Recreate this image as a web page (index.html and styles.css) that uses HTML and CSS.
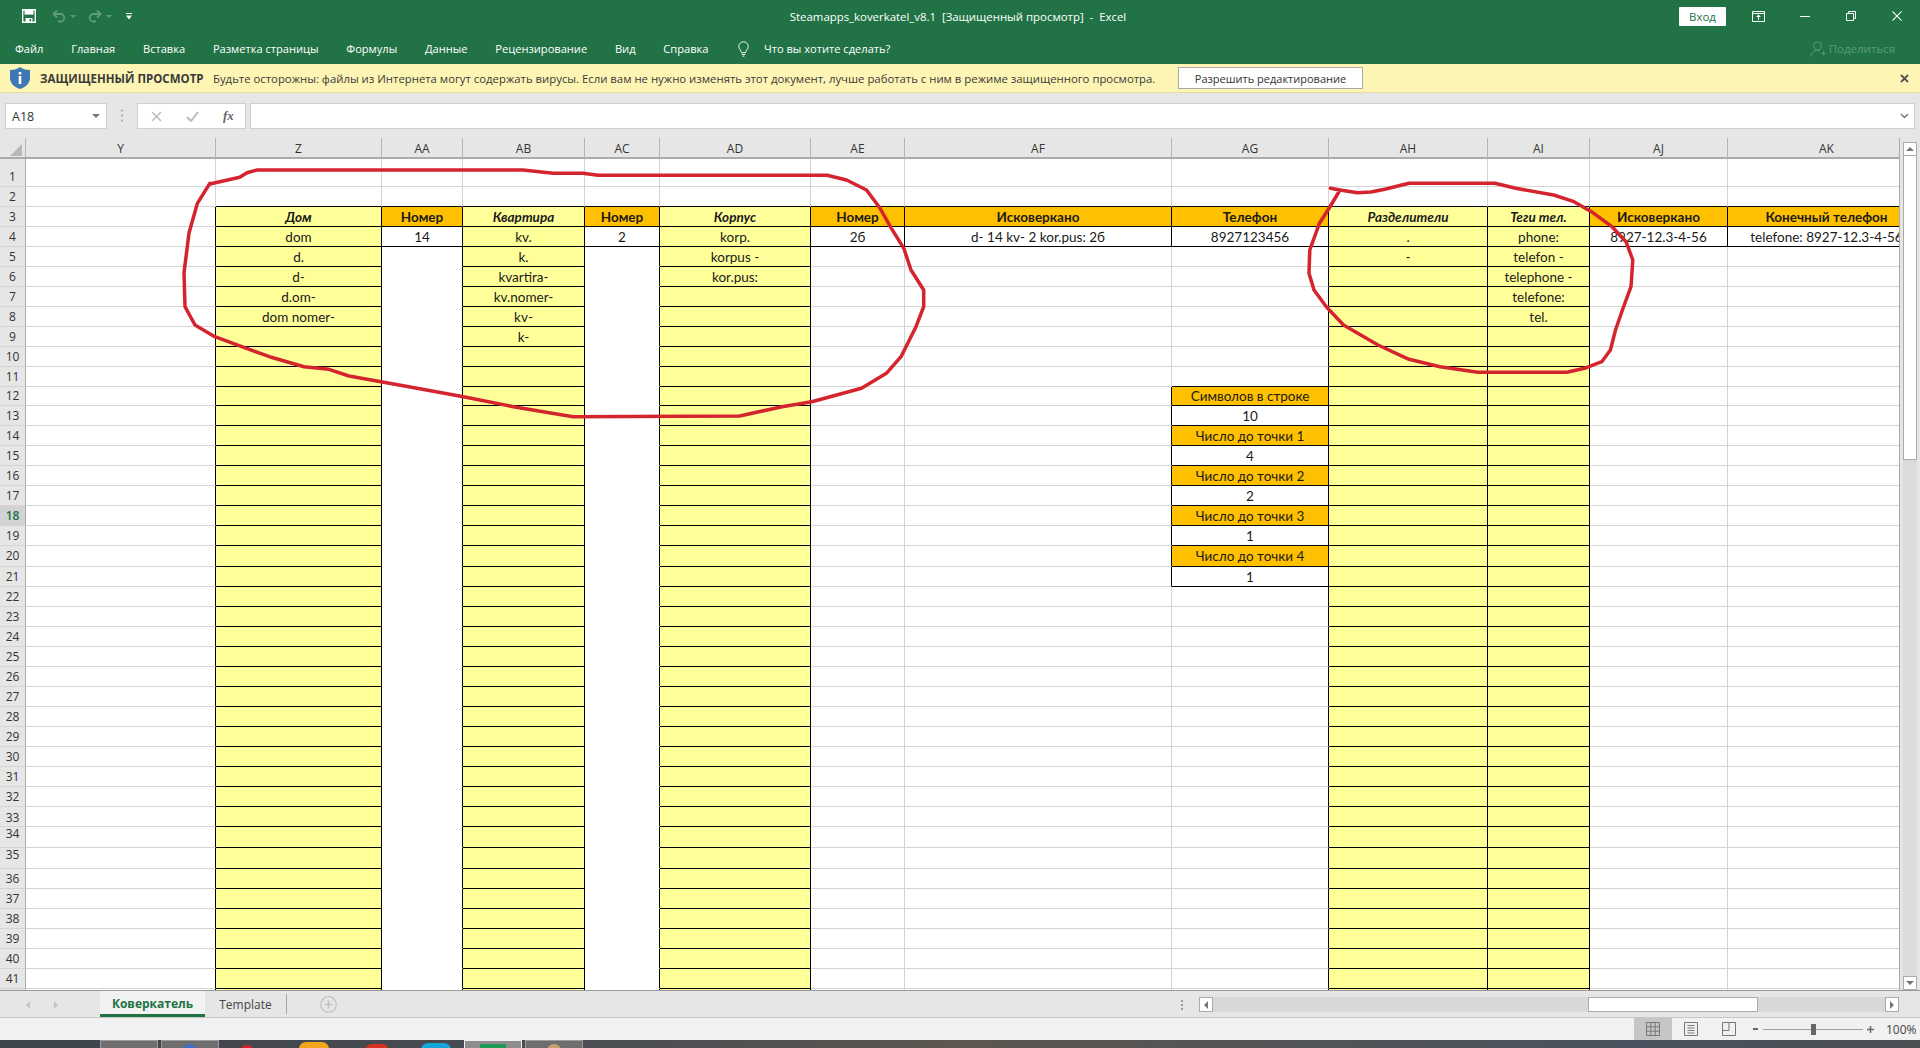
FILE: index.html
```html
<!DOCTYPE html>
<html lang="ru">
<head>
<meta charset="utf-8">
<title>Steamapps_koverkatel_v8.1</title>
<link rel="stylesheet" href="styles.css">
</head>
<body>
<header class="titlebar">
  <div class="qat">
    <svg class="ic-save" viewBox="0 0 14 14"><path d="M.7.7h12.6v12.6H.7z" fill="none" stroke="#fff" stroke-width="1.4"/><path d="M2.5 1h9v4.6h-9z" fill="#fff"/><path d="M3.5 9h7v4h-7z" fill="#fff"/><path d="M7.5 10h1.6v2.4H7.5z" fill="#217346"/></svg>
    <svg class="ic-undo" viewBox="0 0 14 14"><path d="M5 1.5 1.5 5 5 8.500M2 5h6.500a3.700 3.700 0 0 1 0 7.500H6" fill="none" stroke="#5f9c7c" stroke-width="1.800"/></svg>
    <span class="caret-dim"></span>
    <svg class="ic-redo" viewBox="0 0 14 14"><path d="M9 1.500 12.500 5 9 8.500M12 5H5.500a3.700 3.700 0 0 0 0 7.500H8" fill="none" stroke="#5f9c7c" stroke-width="1.800"/></svg>
    <span class="caret-dim"></span>
    <svg class="ic-custom" viewBox="0 0 6 7"><path d="M0 0h6v1H0zM0 2.500h6L3 6.500z" fill="#fff"/></svg>
  </div>
  <div class="doc-title">Steamapps_koverkatel_v8.1&nbsp; [Защищенный просмотр] &nbsp;-&nbsp; Excel</div>
  <div class="win">
    <button class="signin">Вход</button>
    <svg class="ic-display" viewBox="0 0 13 11"><path d="M.5.500h12v10H.5zM.5 2.500h12" fill="none" stroke="#fff"/><path d="M6.500 3.500 4 6h2v3h1V6h2z" fill="#fff"/></svg>
    <svg class="ic-min" viewBox="0 0 10 1"><path d="M0 0h10v1H0z" fill="#fff"/></svg>
    <svg class="ic-restore" viewBox="0 0 10 10"><path d="M.5 2.500h7v7h-7zM2.500 2.500v-2h7v7h-2" fill="none" stroke="#fff"/></svg>
    <svg class="ic-close" viewBox="0 0 10 10"><path d="m.4.400 9.200 9.200M9.600.400.4 9.600" fill="none" stroke="#fff" stroke-width="1.100"/></svg>
  </div>
</header>
<nav class="menu">
  <span>Файл</span><span>Главная</span><span>Вставка</span><span>Разметка страницы</span><span>Формулы</span><span>Данные</span><span>Рецензирование</span><span>Вид</span><span>Справка</span>
  <svg class="ic-bulb" viewBox="0 0 12 17"><path d="M3.800 12.500C3.500 10 1 8.800.8 5.800a5.200 5.200 0 0 1 10.400 0C11 8.800 8.500 10 8.200 12.500zM4 14.500h4M5 16.300h2" fill="none" stroke="#fff"/></svg>
  <span class="tell">Что вы хотите сделать?</span>
  <span class="share"><svg class="ic-share" viewBox="0 0 17 17"><path d="M8 9.500A4.200 4.200 0 1 0 8 1a4.200 4.200 0 0 0 0 8.500zM1 16.500c.3-4 3-6.500 7-6.500 1 0 1.800.1 2.500.4M12 13h5M14.500 10.500v5" fill="none" stroke="#5b9a79"/></svg>Поделиться</span>
</nav>
<section class="protected">
  <svg class="ic-shield" viewBox="0 0 20 22"><path d="M10 0c2.500 2 5.500 2.800 10 3v8c0 5-4 9-10 11C4 20 0 16 0 11V3c4.500-.2 7.500-1 10-3z" fill="#3f79b5"/><path d="M8.700 5h2.600v2.500H8.700zM8.700 9h2.600v8H8.700z" fill="#fff"/></svg>
  <strong>ЗАЩИЩЕННЫЙ ПРОСМОТР</strong>
  <span class="warn">Будьте осторожны: файлы из Интернета могут содержать вирусы. Если вам не нужно изменять этот документ, лучше работать с ним в режиме защищенного просмотра.</span>
  <button class="allow">Разрешить редактирование</button>
  <svg class="ic-x" viewBox="0 0 9 9"><path d="m1 1 7 7M8 1 1 8" fill="none" stroke="#555" stroke-width="1.800"/></svg>
</section>
<section class="formula">
  <div class="namebox">A18<span class="caret"></span></div>
  <div class="dots"></div>
  <div class="fxbox">
    <svg class="ic-cancel" viewBox="0 0 11 11"><path d="m1 1 9 9M10 1l-9 9" fill="none" stroke="#bdbdbd" stroke-width="1.500"/></svg>
    <svg class="ic-ok" viewBox="0 0 13 11"><path d="m1 6 4 4 7-9" fill="none" stroke="#bdbdbd" stroke-width="2"/></svg>
    <i class="fx">fx</i>
  </div>
  <div class="input"><svg class="ic-chev" viewBox="0 0 9 6"><path d="m1 1 3.500 3.500L8 1" fill="none" stroke="#777" stroke-width="1.500"/></svg></div>
</section>
<main class="sheet">
  <div class="wrap">
    <table class="grid">
      <colgroup><col class="c0"><col class="cy"><col class="cz"><col class="caa"><col class="cab"><col class="cac"><col class="cad"><col class="cae"><col class="caf"><col class="cag"><col class="cah"><col class="cai"><col class="caj"><col class="cak"></colgroup>
      <thead><tr><th><span class="tri"></span></th><th>Y</th><th>Z</th><th>AA</th><th>AB</th><th>AC</th><th>AD</th><th>AE</th><th>AF</th><th>AG</th><th>AH</th><th>AI</th><th>AJ</th><th>AK</th></tr></thead>
      <tbody>
        <tr class="r1"><th class="dn8">1</th><td></td><td></td><td></td><td></td><td></td><td></td><td></td><td></td><td></td><td></td><td></td><td></td><td></td></tr>
        <tr class="top"><th>2</th><td></td><td></td><td></td><td></td><td></td><td></td><td></td><td></td><td></td><td></td><td></td><td></td><td></td></tr>
        <tr class="hd"><th>3</th><td></td><td class="hy">Дом</td><td class="ho">Номер</td><td class="hy">Квартира</td><td class="ho">Номер</td><td class="hy">Корпус</td><td class="ho">Номер</td><td class="ho">Исковеркано</td><td class="ho">Телефон</td><td class="hy">Разделители</td><td class="hy">Теги тел.</td><td class="ho">Исковеркано</td><td class="ho">Конечный телефон</td></tr>
        <tr class="hd v"><th>4</th><td></td><td>dom</td><td>14</td><td>kv.</td><td>2</td><td>korp.</td><td>2б</td><td>d- 14 kv- 2 kor.pus: 2б</td><td>8927123456</td><td>.</td><td>phone:</td><td>8927-12.3-4-56</td><td>telefone: 8927-12.3-4-56</td></tr>
        <tr class="b"><th>5</th><td></td><td>d.</td><td></td><td>k.</td><td></td><td>korpus -</td><td></td><td></td><td></td><td>-</td><td>telefon -</td><td></td><td></td></tr>
        <tr class="b"><th>6</th><td></td><td>d-</td><td></td><td>kvartira-</td><td></td><td>kor.pus:</td><td></td><td></td><td></td><td></td><td>telephone -</td><td></td><td></td></tr>
        <tr class="b"><th>7</th><td></td><td>d.om-</td><td></td><td>kv.nomer-</td><td></td><td></td><td></td><td></td><td></td><td></td><td>telefone:</td><td></td><td></td></tr>
        <tr class="b"><th>8</th><td></td><td>dom nomer-</td><td></td><td>kv-</td><td></td><td></td><td></td><td></td><td></td><td></td><td>tel.</td><td></td><td></td></tr>
        <tr class="b"><th>9</th><td></td><td></td><td></td><td>k-</td><td></td><td></td><td></td><td></td><td></td><td></td><td></td><td></td><td></td></tr>
        <tr class="b"><th>10</th><td></td><td></td><td></td><td></td><td></td><td></td><td></td><td></td><td></td><td></td><td></td><td></td><td></td></tr>
        <tr class="b g0"><th>11</th><td></td><td></td><td></td><td></td><td></td><td></td><td></td><td></td><td></td><td></td><td></td><td></td><td></td></tr>
        <tr class="b g r12"><th>12</th><td></td><td></td><td></td><td></td><td></td><td></td><td></td><td></td><td class="ho">Символов в строке</td><td></td><td></td><td></td><td></td></tr>
        <tr class="b g"><th>13</th><td></td><td></td><td></td><td></td><td></td><td></td><td></td><td></td><td>10</td><td></td><td></td><td></td><td></td></tr>
        <tr class="b g"><th>14</th><td></td><td></td><td></td><td></td><td></td><td></td><td></td><td></td><td class="ho">Число до точки 1</td><td></td><td></td><td></td><td></td></tr>
        <tr class="b g"><th>15</th><td></td><td></td><td></td><td></td><td></td><td></td><td></td><td></td><td>4</td><td></td><td></td><td></td><td></td></tr>
        <tr class="b g"><th>16</th><td></td><td></td><td></td><td></td><td></td><td></td><td></td><td></td><td class="ho">Число до точки 2</td><td></td><td></td><td></td><td></td></tr>
        <tr class="b g"><th>17</th><td></td><td></td><td></td><td></td><td></td><td></td><td></td><td></td><td>2</td><td></td><td></td><td></td><td></td></tr>
        <tr class="b g"><th class="sel">18</th><td></td><td></td><td></td><td></td><td></td><td></td><td></td><td></td><td class="ho">Число до точки 3</td><td></td><td></td><td></td><td></td></tr>
        <tr class="b g"><th>19</th><td></td><td></td><td></td><td></td><td></td><td></td><td></td><td></td><td>1</td><td></td><td></td><td></td><td></td></tr>
        <tr class="b g r20"><th>20</th><td></td><td></td><td></td><td></td><td></td><td></td><td></td><td></td><td class="ho">Число до точки 4</td><td></td><td></td><td></td><td></td></tr>
        <tr class="b g"><th>21</th><td></td><td></td><td></td><td></td><td></td><td></td><td></td><td></td><td>1</td><td></td><td></td><td></td><td></td></tr>
        <tr class="b"><th>22</th><td></td><td></td><td></td><td></td><td></td><td></td><td></td><td></td><td></td><td></td><td></td><td></td><td></td></tr>
        <tr class="b"><th>23</th><td></td><td></td><td></td><td></td><td></td><td></td><td></td><td></td><td></td><td></td><td></td><td></td><td></td></tr>
        <tr class="b"><th>24</th><td></td><td></td><td></td><td></td><td></td><td></td><td></td><td></td><td></td><td></td><td></td><td></td><td></td></tr>
        <tr class="b"><th>25</th><td></td><td></td><td></td><td></td><td></td><td></td><td></td><td></td><td></td><td></td><td></td><td></td><td></td></tr>
        <tr class="b"><th>26</th><td></td><td></td><td></td><td></td><td></td><td></td><td></td><td></td><td></td><td></td><td></td><td></td><td></td></tr>
        <tr class="b"><th>27</th><td></td><td></td><td></td><td></td><td></td><td></td><td></td><td></td><td></td><td></td><td></td><td></td><td></td></tr>
        <tr class="b"><th>28</th><td></td><td></td><td></td><td></td><td></td><td></td><td></td><td></td><td></td><td></td><td></td><td></td><td></td></tr>
        <tr class="b"><th>29</th><td></td><td></td><td></td><td></td><td></td><td></td><td></td><td></td><td></td><td></td><td></td><td></td><td></td></tr>
        <tr class="b"><th>30</th><td></td><td></td><td></td><td></td><td></td><td></td><td></td><td></td><td></td><td></td><td></td><td></td><td></td></tr>
        <tr class="b"><th>31</th><td></td><td></td><td></td><td></td><td></td><td></td><td></td><td></td><td></td><td></td><td></td><td></td><td></td></tr>
        <tr class="b"><th>32</th><td></td><td></td><td></td><td></td><td></td><td></td><td></td><td></td><td></td><td></td><td></td><td></td><td></td></tr>
        <tr class="b"><th class="dn2">33</th><td></td><td></td><td></td><td></td><td></td><td></td><td></td><td></td><td></td><td></td><td></td><td></td><td></td></tr>
        <tr class="b"><th class="up5">34</th><td></td><td></td><td></td><td></td><td></td><td></td><td></td><td></td><td></td><td></td><td></td><td></td><td></td></tr>
        <tr class="b"><th class="up5">35</th><td></td><td></td><td></td><td></td><td></td><td></td><td></td><td></td><td></td><td></td><td></td><td></td><td></td></tr>
        <tr class="b"><th>36</th><td></td><td></td><td></td><td></td><td></td><td></td><td></td><td></td><td></td><td></td><td></td><td></td><td></td></tr>
        <tr class="b"><th>37</th><td></td><td></td><td></td><td></td><td></td><td></td><td></td><td></td><td></td><td></td><td></td><td></td><td></td></tr>
        <tr class="b"><th>38</th><td></td><td></td><td></td><td></td><td></td><td></td><td></td><td></td><td></td><td></td><td></td><td></td><td></td></tr>
        <tr class="b"><th>39</th><td></td><td></td><td></td><td></td><td></td><td></td><td></td><td></td><td></td><td></td><td></td><td></td><td></td></tr>
        <tr class="b"><th>40</th><td></td><td></td><td></td><td></td><td></td><td></td><td></td><td></td><td></td><td></td><td></td><td></td><td></td></tr>
        <tr class="b"><th>41</th><td></td><td></td><td></td><td></td><td></td><td></td><td></td><td></td><td></td><td></td><td></td><td></td><td></td></tr>
        <tr class="b"><th></th><td></td><td></td><td></td><td></td><td></td><td></td><td></td><td></td><td></td><td></td><td></td><td></td><td></td></tr>
      </tbody>
    </table>
  </div>
  <aside class="vscroll">
    <div class="sbtn"><span class="tri-up"></span></div>
    <div class="vthumb"></div>
    <div class="vtrack"></div>
    <div class="sbtn"><span class="tri-down"></span></div>
  </aside>
</main>
<footer class="tabs">
  <span class="nav-l"></span><span class="nav-r"></span>
  <div class="tab active">Коверкатель</div>
  <div class="tab">Template</div>
  <span class="divider"></span>
  <svg class="ic-plus" viewBox="0 0 17 17"><circle cx="8.500" cy="8.500" r="7.800" fill="none" stroke="#c4c4c4" stroke-width="1.300"/><path d="M4.500 8.500h8M8.500 4.500v8" stroke="#c4c4c4" stroke-width="1.600"/></svg>
  <span class="vdots"></span>
  <div class="hscroll">
    <div class="hbtn"><span class="tri-left"></span></div>
    <div class="htrack"></div>
    <div class="hthumb"></div>
    <div class="htrack end"></div>
    <div class="hbtn"><span class="tri-right"></span></div>
  </div>
</footer>
<div class="status">
  <div class="view on"><svg class="ic-view" viewBox="0 0 14 14"><path d="M.5.500h13v13H.5zM.5 4.800h13M.5 9.200h13M4.800.500v13M9.200.500v13" fill="none" stroke="#777"/></svg></div>
  <div class="view"><svg class="ic-view" viewBox="0 0 14 14"><path d="M.5.500h13v13H.5z" fill="none" stroke="#777"/><path d="M3.500 3.500h7M3.500 6h7M3.500 8.500h7M3.500 11h7" fill="none" stroke="#777"/></svg></div>
  <div class="view"><svg class="ic-view" viewBox="0 0 14 14"><path d="M.5.500h13v13H.5zM.5 8.500h6.500V.5" fill="none" stroke="#777"/></svg></div>
  <span class="zminus"></span>
  <div class="slider"><span class="knob"></span></div>
  <svg class="zplus" viewBox="0 0 7 7"><path d="M0 3.500h7M3.500 0v7" stroke="#666" stroke-width="1.500"/></svg>
  <span class="pct">100%</span>
</div>
<div class="taskbar">
  <span class="tb"></span><span class="tb"><i class="dot star"></i></span>
  <i class="dot red"></i><i class="dot amber"></i><i class="dot crim"></i><i class="dot sky"></i>
  <span class="tb act"><i class="dot green"></i></span><span class="tb"><i class="dot tan"></i></span>
  <span class="clock">10:30</span>
</div>
<svg class="ink" viewBox="0 0 1920 1048">
  <polyline points="209.800,184 219.800,181.700 239.700,177.300 247,172.700 257,170 523,170 553,173.300 583,173.300 598,175.300 827,175.300 846.600,180 866.500,190 879,206.700 891.400,228.300 903.800,248.300 911,270 923.700,290 923.700,306.700 916,326.700 901,356.700 886.400,373.300 861.500,388.300 811.800,401.700 782,406.700 739.600,416 573,416.700 513.300,406.700 463.500,396.700 408.800,386.700 349,376 329,369.300 304,366.700 269.500,356.700 214.800,336.700 195,325 185,306.700 184,273 189,233 197.400,203.300 209.800,183.300"/>
  <polyline points="1330.400,188.300 1340,190 1357.300,192.700 1371,192 1384.800,189.300 1409,183.300 1495,183.300 1515.700,188.300 1553.600,195 1574,201.700 1591.400,211.700 1612,226.700 1626,241.700 1632.800,260 1631,286.700 1622.400,310 1615.500,330 1610.400,350 1601.800,361.700 1584.500,368.300 1567,372.300 1477.800,372.300 1440,366.700 1409,359.300 1378,345 1343.500,325 1326.300,306.700 1314,290 1309,273.300 1309.800,250 1319.400,223.300 1328,210 1340,190"/>
</svg>
</body>
</html>
```
FILE: styles.css
```css
* { box-sizing: border-box; }
html, body { margin: 0; padding: 0; }
body {
  width: 1920px; height: 1048px; overflow: hidden; position: relative;
  display: flex; flex-direction: column;
  font: 12px "Open Sans", "Noto Sans", sans-serif; color: #333; background: #e6e6e6;
}
svg { display: block; flex: none; }

/* title bar */
.titlebar { height: 32px; background: #217346; display: flex; align-items: center; color: #fff; flex: none; }
.qat { display: flex; align-items: center; padding-left: 22px; width: 400px; flex: none; }
.ic-save { width: 14px; height: 14px; }
.ic-undo { width: 14px; height: 14px; margin-left: 16px; }
.ic-redo { width: 14px; height: 14px; margin-left: 12px; }
.caret-dim { width: 0; height: 0; border: 3px solid transparent; border-top: 3px solid #5f9c7c; border-bottom: 0; margin-left: 4px; }
.ic-custom { width: 6px; height: 7px; margin-left: 14px; }
.doc-title { width: 1110px; text-align: center; font-size: 11.4px; padding-left: 6px; white-space: nowrap; flex: none; }
.win { display: flex; align-items: center; justify-content: flex-end; flex: 1; padding-right: 18px; }
.signin { width: 47px; height: 19px; margin: 0 26px 0 0; padding: 0; border: 0; background: #fff; color: #217346; font: 11.5px "Open Sans", sans-serif; border-radius: 1px; }
.ic-display { width: 13px; height: 11px; margin-right: 35px; }
.ic-min { width: 10px; height: 1px; margin-right: 36px; }
.ic-restore { width: 10px; height: 10px; margin-right: 36px; }
.ic-close { width: 10px; height: 10px; }

/* ribbon tabs */
.menu { height: 32px; background: #217346; display: flex; align-items: center; gap: 27.8px; padding: 1px 25px 0 15px; color: #fff; font-size: 11.1px; flex: none; white-space: nowrap; }
.ic-bulb { width: 11px; height: 16px; margin-left: 2px; margin-right: -13px; }
.share { margin-left: auto; color: #5b9a79; display: flex; align-items: center; gap: 3px; font-size: 11.5px; }
.ic-share { width: 16px; height: 16px; }

/* protected view */
.protected { height: 29px; background: #fdf5b4; border-bottom: 1px solid #e4dca0; display: flex; align-items: center; padding-left: 10px; flex: none; white-space: nowrap; font-size: 11.35px; color: #3a3a3a; }
.ic-shield { width: 20px; height: 22px; margin-right: 10px; }
.protected strong { font-weight: 700; width: 173px; font-size: 11.5px; }
.warn { width: 965px; }
.allow { width: 185px; height: 22px; margin: 0; padding: 0; background: #fff; border: 1px solid #ababab; font: 11px "Open Sans", sans-serif; color: #333; }
.ic-x { width: 9px; height: 9px; margin-left: auto; margin-right: 11px; }

/* formula bar */
.formula { height: 45px; display: flex; align-items: flex-start; padding: 10px 5px 0; flex: none; }
.namebox { width: 102px; height: 26px; background: #fff; border: 1px solid #d0d0d0; display: flex; align-items: center; justify-content: space-between; padding: 0 6px; font-size: 12.5px; }
.caret { width: 0; height: 0; border: 4px solid transparent; border-top: 4px solid #777; border-bottom: 0; }
.dots { width: 2px; height: 15px; margin: 5px 14px 0; background: radial-gradient(circle, #aaa 1px, transparent 1.2px) 0 0 / 2px 5px; }
.fxbox { width: 109px; height: 26px; background: #fff; border: 1px solid #d0d0d0; display: flex; align-items: center; padding-left: 13px; }
.ic-cancel { width: 11px; height: 11px; }
.ic-ok { width: 13px; height: 11px; margin-left: 24px; }
.fx { font: italic 700 13px "Liberation Serif", serif; color: #666; margin-left: 24px; }
.input { width: 1665px; height: 26px; margin-left: 4px; background: #fff; border: 1px solid #d0d0d0; display: flex; align-items: center; justify-content: flex-end; padding-right: 5px; }
.ic-chev { width: 9px; height: 6px; }

/* sheet */
.sheet { height: 852px; display: flex; flex: none; overflow: hidden; }
.wrap { width: 1900px; height: 852px; overflow: hidden; border-right: 1px solid #ababab; flex: none; }
.grid { border-collapse: separate; border-spacing: 0; table-layout: fixed; width: 1926px; font: 13.5px Lato, "Open Sans", sans-serif; color: #1a1a1a; background: #fff; }
.c0 { width: 26px; } .cy { width: 190px; } .cz { width: 166px; } .caa { width: 81px; } .cab { width: 122px; } .cac { width: 75px; } .cad { width: 151px; } .cae { width: 94px; } .caf { width: 267px; } .cag { width: 157px; } .cah { width: 159px; } .cai { width: 102px; } .caj { width: 138px; } .cak { width: 198px; }

.grid thead tr { height: 21px; }
.grid thead th { background: #e6e6e6; border-right: 1px solid #b5b5b5; border-bottom: 2px solid #ababab; font: 400 12px/16px "Open Sans", sans-serif; color: #333; padding: 2px 0 0; }
.tri { display: block; width: 0; height: 0; border-left: 12px solid transparent; border-bottom: 12px solid #b8b8b8; margin: 2px 0 0 10px; }

.grid tbody tr { height: 20px; }
.grid tbody tr.r1 { height: 28px; }
.grid tbody tr.r12 { height: 19px; }
.grid tbody tr.r20 { height: 21px; }
.grid tbody th { background: #e6e6e6; border-right: 1px solid #ababab; border-bottom: 1px solid #d4d4d4; font: 400 12px/14px "Open Sans", sans-serif; color: #333; padding: 0; }
.grid tbody th.sel { background: #d2d2d2; color: #217346; font-weight: 600; }
.grid tbody th.dn8 { padding-top: 8px; }
.grid tbody th.dn2 { padding-top: 3px; }
.grid tbody th.up5 { padding-bottom: 6px; }

.grid td { border-right: 1px solid #d4d4d4; border-bottom: 1px solid #d4d4d4; padding: 0; text-align: center; white-space: nowrap; overflow: hidden; line-height: 18px; }

/* row 2 closes on top of the coloured block */
.top td:nth-child(n+3) { border-bottom-color: #000; }
/* rows with a complete black frame */
.hd td:nth-child(n+2) { border-right-color: #000; }
.hd td:nth-child(n+3) { border-bottom-color: #000; }
/* body rows: yellow columns */
.b td:nth-child(2), .b td:nth-child(3), .b td:nth-child(4), .b td:nth-child(5), .b td:nth-child(6), .b td:nth-child(7),
.b td:nth-child(10), .b td:nth-child(11), .b td:nth-child(12) { border-right-color: #000; }
.b td:nth-child(3), .b td:nth-child(5), .b td:nth-child(7), .b td:nth-child(11), .b td:nth-child(12) { border-bottom-color: #000; }
.b td:nth-child(4), .b td:nth-child(6) { border-bottom-color: transparent; }
.hd td:nth-child(3), .hd td:nth-child(5), .hd td:nth-child(7), .hd td:nth-child(11), .hd td:nth-child(12),
.b td:nth-child(3), .b td:nth-child(5), .b td:nth-child(7), .b td:nth-child(11), .b td:nth-child(12) { background: #ffff99; }
/* AG parameter block */
.g td:nth-child(9) { border-right-color: #000; }
.g td:nth-child(10), .g0 td:nth-child(10) { border-bottom-color: #000; }
.grid .ho { background: #ffc000; }
.hd .ho { font-weight: 700; }
.hd .hy { font-weight: 700; font-style: italic; }

/* vertical scrollbar */
.vscroll { width: 20px; height: 852px; padding: 4px 3px 0; display: flex; flex-direction: column; flex: none; }
.sbtn { height: 14px; background: #fff; border: 1px solid #ababab; display: flex; align-items: center; justify-content: center; flex: none; }
.vthumb { height: 304px; background: #fff; border: 1px solid #ababab; border-top: 0; flex: none; }
.vtrack { flex: 1; background: #dbdbdb; }
.tri-up { width: 0; height: 0; border: 4px solid transparent; border-bottom: 4px solid #777; border-top: 0; }
.tri-down { width: 0; height: 0; border: 4px solid transparent; border-top: 4px solid #777; border-bottom: 0; }

/* sheet tabs */
.tabs { height: 28px; border-top: 1px solid #9a9a9a; border-bottom: 1px solid #c6c6c6; background: #e6e6e6; display: flex; align-items: stretch; flex: none; }
.nav-l { width: 0; height: 0; border: 4px solid transparent; border-right: 4px solid #c4c4c4; border-left: 0; margin: 10px 24px 0 26px; }
.nav-r { width: 0; height: 0; border: 4px solid transparent; border-left: 4px solid #c4c4c4; border-right: 0; margin: 10px 42px 0 0; }
.tab { display: flex; align-items: center; justify-content: center; font: 12px "Open Sans", sans-serif; color: #444; height: 26px; }
.tab.active { width: 105px; background: #f2f2f2; color: #217346; font-weight: 700; border-bottom: 3px solid #217346; padding-top: 2px; }
.tab:not(.active) { width: 81px; }
.divider { width: 1px; height: 20px; background: #a8a8a8; margin: 3px 0 0; }
.ic-plus { width: 17px; height: 17px; margin: 5px 0 0 33px; }
.vdots { width: 2px; height: 12px; margin: 8px 0 0 844px; background: radial-gradient(circle, #999 1px, transparent 1.2px) 0 0 / 2px 4px; }
.hscroll { width: 700px; height: 15px; margin: 6px 21px 0 auto; display: flex; flex: none; }
.hbtn { width: 14px; background: #fff; border: 1px solid #ababab; display: flex; align-items: center; justify-content: center; flex: none; }
.htrack { width: 375px; background: #d8d8d8; flex: none; }
.htrack.end { width: 127px; }
.hthumb { width: 170px; background: #fff; border: 1px solid #ababab; flex: none; }
.tri-left { width: 0; height: 0; border: 4px solid transparent; border-right: 4px solid #777; border-left: 0; }
.tri-right { width: 0; height: 0; border: 4px solid transparent; border-left: 4px solid #777; border-right: 0; }

/* status bar */
.status { height: 22px; background: #f1f1f1; display: flex; align-items: center; padding-left: 1634px; flex: none; }
.view { width: 38px; height: 22px; display: flex; align-items: center; justify-content: center; }
.view.on { background: #c6c6c6; }
.ic-view { width: 14px; height: 14px; }
.zminus { width: 5px; height: 2px; background: #666; margin-left: 5px; }
.slider { width: 100px; height: 1px; background: #a0a0a0; margin-left: 5px; display: flex; align-items: center; padding-left: 48px; }
.knob { width: 5px; height: 11px; background: #666; flex: none; }
.zplus { width: 7px; height: 7px; margin-left: 4px; }
.pct { margin-left: 12px; color: #444; font-size: 12px; }

/* desktop taskbar, cropped */
.taskbar { height: 8px; background: linear-gradient(90deg, #3d444c 0, #4d4f53 35%, #5d5650 50%, #47525e 85%, #4b4d52 100%); display: flex; align-items: flex-start; padding-left: 100px; overflow: hidden; flex: none; }
.tb { width: 58px; height: 8px; margin-right: 3px; background: #6e6e6e; border: 1px solid #9c9c9c; border-bottom: 0; display: flex; justify-content: center; flex: none; }
.tb.act { background: #8d8d8d; border-color: #f0f0f0; margin-left: 13.5px; }
.dot { display: block; width: 14px; height: 10px; border-radius: 7px 7px 0 0; flex: none; }
.star { background: #3f6fc4; margin-top: 3px; }
.red { background: #d8202a; margin: 5px 0 0 18px; }
.amber { background: #f2a51a; margin: 2px 0 0 45px; width: 30px; }
.crim { background: #d63020; margin: 4px 0 0 35.5px; width: 24px; }
.sky { background: #18a6da; margin: 3px 0 0 32px; width: 30px; }
.green { background: #1e9a57; margin-top: 3px; width: 26px; border-radius: 0; }
.tan { background: #c8a070; margin-top: 3px; }
.clock { color: #fff; font-size: 12px; line-height: 14px; margin: 6px 0 0 1230px; flex: none; }

/* red marker annotations drawn over the sheet */
.ink { position: absolute; left: 0; top: 0; width: 1920px; height: 1048px; pointer-events: none; }
.ink polyline { fill: none; stroke: #d4252e; stroke-width: 3.5; stroke-linejoin: round; stroke-linecap: round; }
```
